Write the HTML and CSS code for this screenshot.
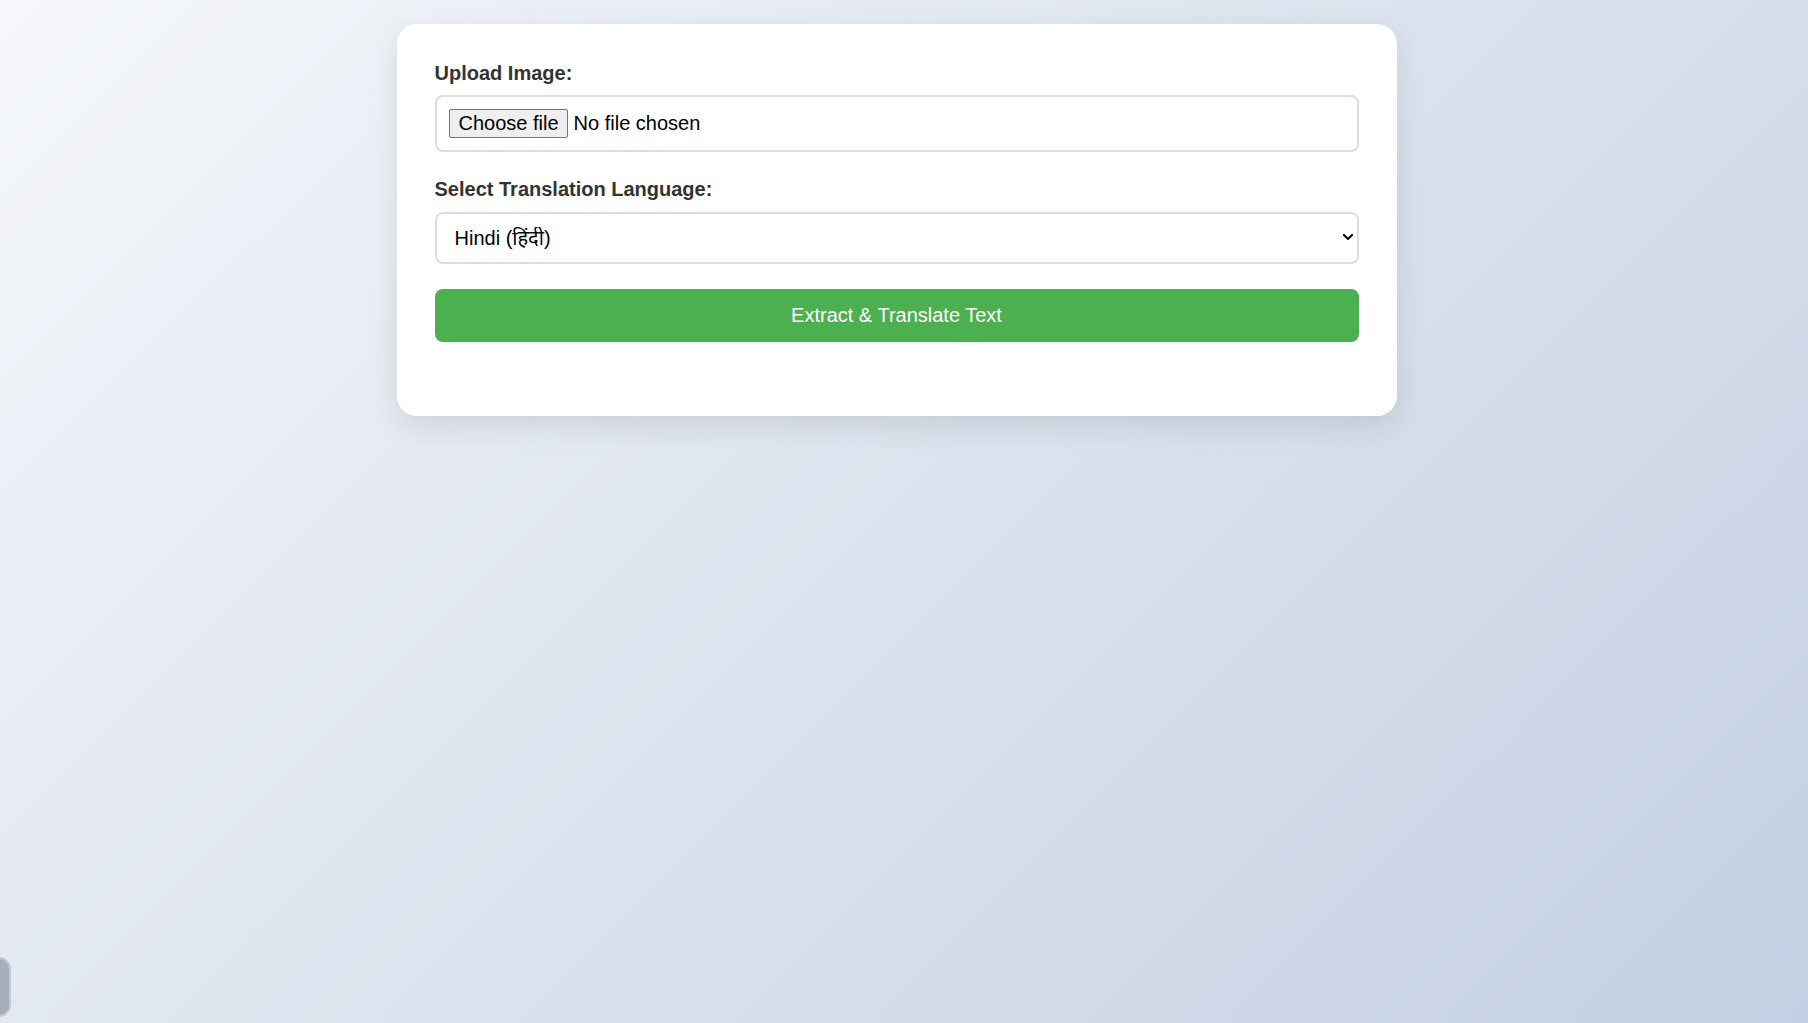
FILE: index.html
```html
<!DOCTYPE html>
<html lang="en">
<head>
<meta charset="utf-8">
<title>Image Text Extractor &amp; Translator</title>
<link rel="stylesheet" href="styles.css">
</head>
<body>
  <main class="card">
    <label class="field-label first" for="image">Upload Image:</label>
    <div class="field file-field">
      <label class="file-btn" for="image">Choose file</label>
      <span class="file-name">No file chosen</span>
      <input class="file-input" type="file" id="image" accept="image/*">
    </div>

    <label class="field-label" for="lang">Select Translation Language:</label>
    <div class="select-wrap">
      <select class="field select-field" id="lang">
        <option>Hindi (हिंदी)</option>
        <option>Tamil (தமிழ்)</option>
        <option>Telugu (తెలుగు)</option>
        <option>Bengali (বাংলা)</option>
      </select>
      <svg class="chevron" width="10" height="6" viewBox="0 0 10 6" aria-hidden="true">
        <path d="M1 1 L5 5 L9 1" fill="none" stroke="#000" stroke-width="2" stroke-linecap="square"/>
      </svg>
    </div>

    <button class="action" type="button">Extract &amp; Translate Text</button>
    <div class="result"></div>
  </main>
  <div class="side-tab"></div>
</body>
</html>
```
FILE: styles.css
```css
html {
  height: 100%;
}
body {
  margin: 0;
  min-height: 100%;
  padding: 24px 15px 0 0;
  box-sizing: border-box;
  background: linear-gradient(135deg, #f5f7fa 0%, #c3cfe2 100%);
  background-attachment: fixed;
  font-family: "Liberation Sans", Arial, "Noto Sans", sans-serif;
}
.card {
  display: flex;
  flex-direction: column;
  width: 1000px;
  box-sizing: border-box;
  margin: 0 auto;
  padding: 38px 38px 38px;
  background: #fff;
  border-radius: 20px;
  box-shadow: 0 10px 30px rgba(0, 0, 0, 0.1);
}
.field-label {
  display: block;
  font-size: 20px;
  line-height: 23px;
  font-weight: bold;
  color: #333;
  margin-bottom: 11px;
}
.field-label.first {
  margin-bottom: 10px;
}
.field {
  width: 100%;
  box-sizing: border-box;
  padding: 12px;
  border: 2px solid #ddd;
  border-radius: 8px;
  font-family: "Liberation Sans", Arial, "Noto Sans", sans-serif;
  font-size: 20px;
  background: #fff;
  color: #000;
  margin-bottom: 26px;
}
.file-field {
  display: flex;
  align-items: center;
  gap: 6px;
  padding: 12px 12px 12px;
}
.file-btn {
  display: block;
  padding: 2px 8px 2px 9px;
  line-height: 23px;
  border: 1px solid #767676;
  border-radius: 2px;
  background: #efefef;
  color: #000;
  cursor: pointer;
}
.file-name {
  line-height: 23px;
}
.file-input {
  display: none;
}
.select-wrap {
  position: relative;
  margin-bottom: 25px;
}
.select-field {
  display: block;
  height: 52px;
  padding: 0 30px 0 18px;
  margin: 0;
  appearance: none;
  -webkit-appearance: none;
}
.chevron {
  position: absolute;
  right: 6px;
  top: 22px;
  pointer-events: none;
}
.action {
  width: 100%;
  height: 53px;
  padding: 0 15px;
  border: none;
  border-radius: 8px;
  background: #4caf50;
  color: #fff;
  font-family: "Liberation Sans", Arial, sans-serif;
  font-size: 20px;
  cursor: pointer;
}
.result {
  margin-top: 36px;
}
.side-tab {
  position: fixed;
  left: -50px;
  top: 957px;
  width: 57px;
  height: 56px;
  border-radius: 12px;
  background: #a6adbb;
  border: 2px solid #c3c8d2;
}
```
